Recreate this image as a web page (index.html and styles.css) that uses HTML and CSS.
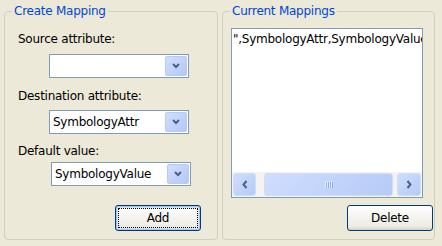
FILE: index.html
```html
<!DOCTYPE html>
<html>
<head>
<meta charset="utf-8">
<link rel="stylesheet" href="styles.css">
</head>
<body>
<div class="window">
  <section class="group group-create">
    <span class="group-title">Create Mapping</span>
    <div class="label label-source">Source attribute:</div>
    <div class="combo combo-source">
      <span class="combo-text"></span>
      <span class="combo-btn"><svg width="8" height="6" viewBox="0 0 8 6"><path d="M1 1 L4 4 L7 1" fill="none" stroke="#4D6185" stroke-width="2"/></svg></span>
    </div>
    <div class="label label-dest">Destination attribute:</div>
    <div class="combo combo-dest">
      <span class="combo-text">SymbologyAttr</span>
      <span class="combo-btn"><svg width="8" height="6" viewBox="0 0 8 6"><path d="M1 1 L4 4 L7 1" fill="none" stroke="#4D6185" stroke-width="2"/></svg></span>
    </div>
    <div class="label label-default">Default value:</div>
    <div class="combo combo-default">
      <span class="combo-text">SymbologyValue</span>
      <span class="combo-btn"><svg width="8" height="6" viewBox="0 0 8 6"><path d="M1 1 L4 4 L7 1" fill="none" stroke="#4D6185" stroke-width="2"/></svg></span>
    </div>
    <button class="btn btn-add">Add</button>
  </section>
  <section class="group group-current">
    <span class="group-title">Current Mappings</span>
    <div class="listbox">
      <div class="list-items">
        <div class="list-item">",SymbologyAttr,SymbologyValue</div>
      </div>
      <div class="hscroll">
        <span class="sb-btn"><svg width="6" height="9" viewBox="0 0 6 9"><path d="M4.5 1 L1.5 4.5 L4.5 8" fill="none" stroke="#4D6185" stroke-width="2"/></svg></span>
        <span class="sb-track"><span class="sb-thumb"><svg width="8" height="7" viewBox="0 0 8 7"><path d="M0.5 0 V7 M2.5 0 V7 M4.5 0 V7 M6.5 0 V7" stroke="#EEF3FE" stroke-width="1"/><path d="M1.5 1 V7 M3.5 1 V7 M5.5 1 V7 M7.5 1 V7" stroke="#8CA9EE" stroke-width="1"/></svg></span></span>
        <span class="sb-btn"><svg width="6" height="9" viewBox="0 0 6 9"><path d="M1.5 1 L4.5 4.5 L1.5 8" fill="none" stroke="#4D6185" stroke-width="2"/></svg></span>
      </div>
    </div>
    <button class="btn btn-delete">Delete</button>
  </section>
</div>
</body>
</html>
```
FILE: styles.css
```css
html, body {
  margin: 0;
  background: #ECE9D8;
}
body {
  font-family: "DejaVu Sans", Tahoma, sans-serif;
  font-size: 12px;
  letter-spacing: -0.25px;
  color: #000;
}
.window {
  display: flex;
  gap: 4px;
  padding: 11px 0 0 4px;
}
.group {
  position: relative;
  box-sizing: border-box;
  height: 229px;
  border: 1px solid #D0D0BF;
  border-radius: 4px;
  display: flex;
  flex-direction: column;
  align-items: flex-start;
}
.group-create {
  width: 214px;
  padding-left: 13px;
}
.group-current {
  width: 213px;
  padding-left: 8px;
}
.group-title {
  position: absolute;
  top: -8px;
  left: 7px;
  padding: 0 2px;
  background: #ECE9D8;
  color: #0046D5;
  line-height: 14px;
  white-space: nowrap;
}
.label {
  line-height: 14px;
  white-space: nowrap;
}
.label-source { margin-top: 20px; }
.label-dest { margin-top: 11px; }
.label-default { margin-top: 10px; }
.combo {
  box-sizing: border-box;
  width: 140px;
  height: 24px;
  border: 1px solid #7F9DB9;
  background: #fff;
  display: flex;
  align-items: center;
  padding: 1px;
}
.combo-source { margin: 8px 0 0 31px; }
.combo-dest { margin: 7px 0 0 31px; }
.combo-default { margin: 4px 0 0 33px; }
.combo-text {
  flex: 1;
  padding-left: 2px;
  line-height: 14px;
  white-space: nowrap;
  overflow: hidden;
}
.combo-btn {
  box-sizing: border-box;
  width: 22px;
  height: 20px;
  border: 1px solid #B9CBF3;
  border-radius: 2px;
  background: linear-gradient(135deg, #D2DFFD 0%, #C1D3FB 50%, #B3C8F6 100%);
  display: flex;
  align-items: center;
  justify-content: center;
}
.btn {
  box-sizing: border-box;
  width: 86px;
  height: 26px;
  border: 1px solid #003C74;
  border-radius: 3px;
  background: linear-gradient(to bottom, #FFFFFF 0%, #F6F5F0 40%, #ECEBE5 85%, #D6D0C5 100%);
  font-family: inherit;
  font-size: 12px;
  letter-spacing: inherit;
  color: #000;
  padding: 0;
}
.btn-add {
  margin: 19px 0 0 97px;
  box-shadow: inset 0 0 0 1px #A8C3EC, inset 0 0 0 2px #D7E4F8;
  outline: 1px dotted #000;
  outline-offset: -4px;
}
.btn-delete {
  margin: 7px 0 0 116px;
}
.listbox {
  box-sizing: border-box;
  margin-top: 16px;
  width: 192px;
  height: 170px;
  border: 1px solid #7F9DB9;
  background: #fff;
  display: flex;
  flex-direction: column;
  overflow: hidden;
}
.list-items {
  flex: 1;
  padding: 3px 0 0 1px;
  overflow: hidden;
}
.list-item {
  line-height: 14px;
  white-space: nowrap;
}
.hscroll {
  height: 25px;
  box-sizing: border-box;
  padding: 1px;
  background: #F4F3EE;
  display: flex;
}
.sb-btn, .sb-thumb {
  box-sizing: border-box;
  border: 1px solid #D2DDF8;
  border-radius: 3px;
  background: linear-gradient(135deg, #D0DEFD 0%, #C3D4FB 50%, #B6CAF8 100%);
  display: flex;
  align-items: center;
  justify-content: center;
}
.sb-btn {
  width: 23px;
}
.sb-btn:last-child {
  width: 24px;
}
.sb-track {
  flex: 1;
  display: flex;
}
.sb-thumb {
  margin-left: 8px;
  width: 129px;
}
```
